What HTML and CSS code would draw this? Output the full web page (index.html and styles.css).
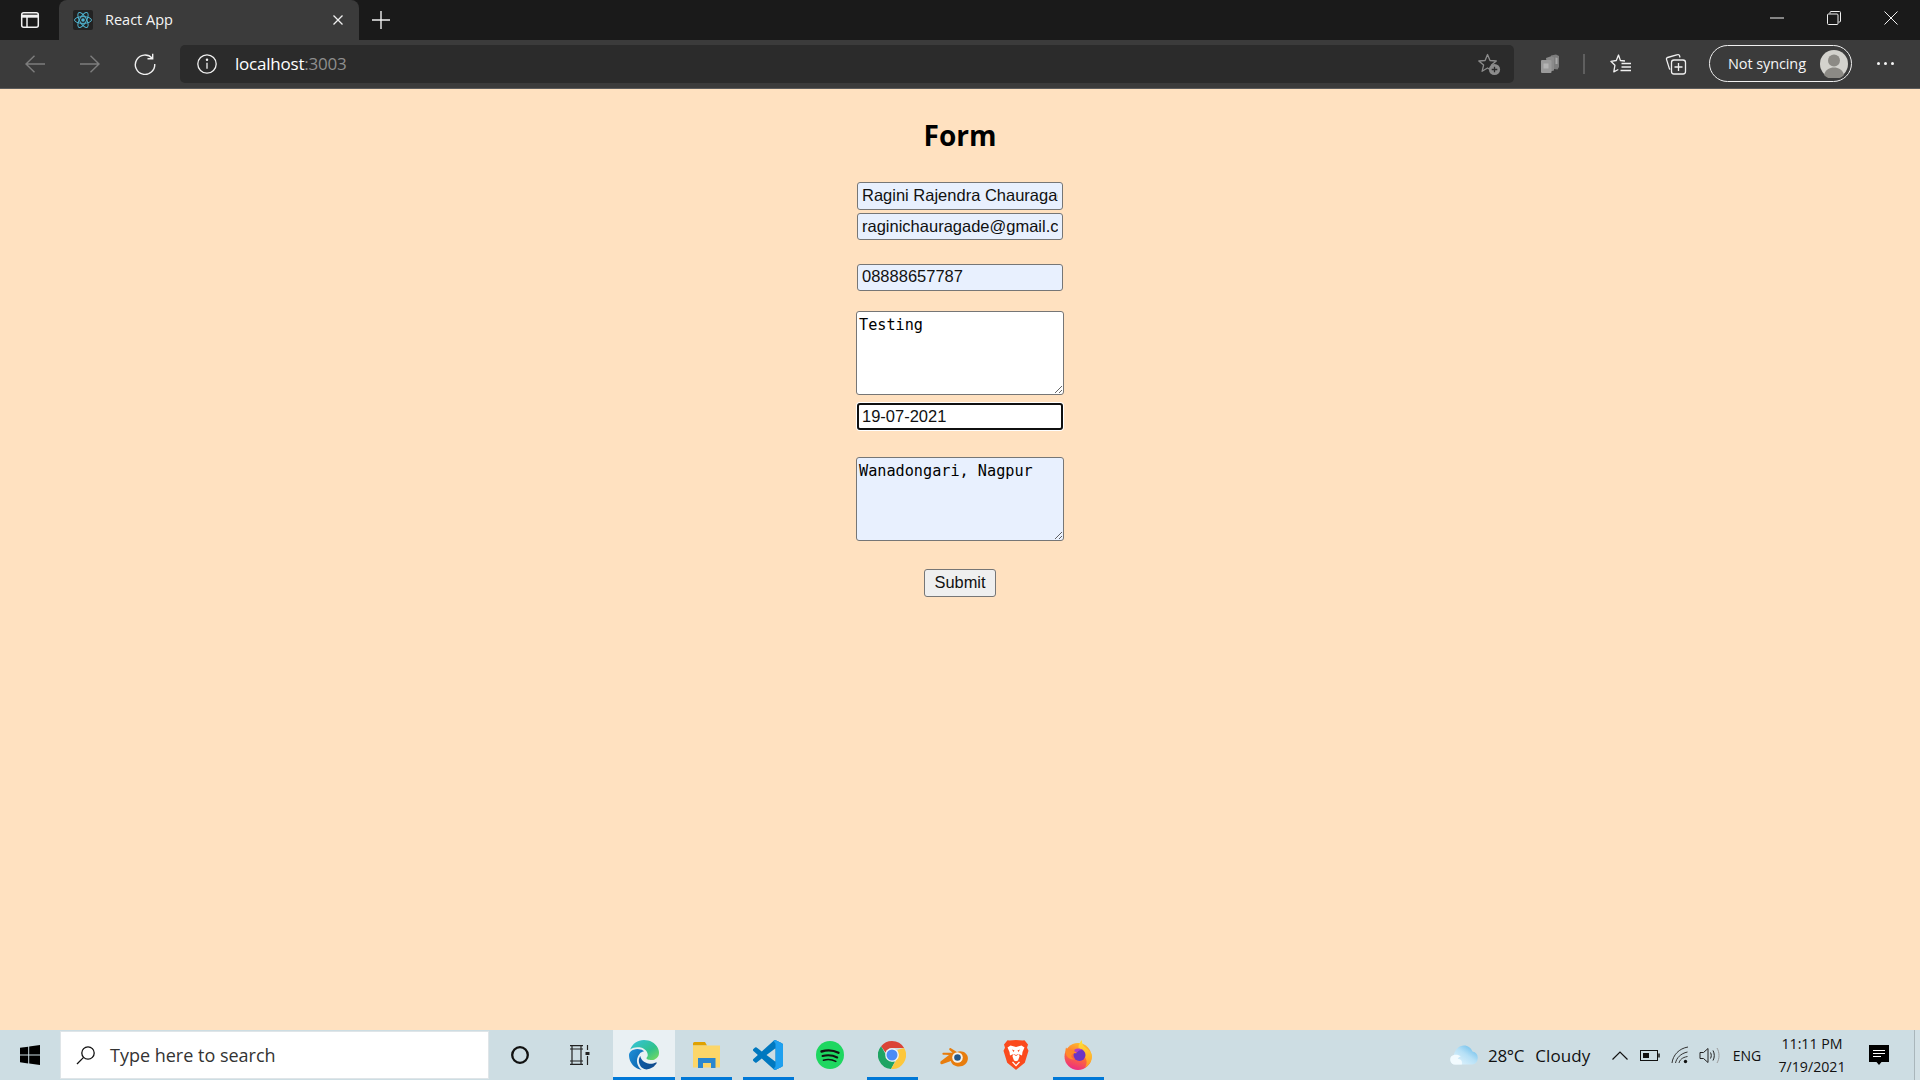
FILE: index.html
```html
<!DOCTYPE html>
<html lang="en">
<head>
<meta charset="utf-8">
<title>React App</title>
<link rel="stylesheet" href="styles.css">
</head>
<body>
<div class="screen">
  <header class="titlebar">
    <div class="sidebtn">
      <svg width="20" height="18" viewBox="0 0 20 18" fill="none" stroke="#f2f2f2" stroke-width="1.5"><rect x="1.7" y="1.7" width="16.6" height="14.6" rx="2"/><path d="M1.7 5.2h16.6" stroke-width="3"/><path d="M7 6v10"/></svg>
    </div>
    <div class="tab">
      <span class="favicon">
        <svg width="20" height="20" viewBox="0 0 20 20" fill="none" stroke="#4fb3cf" stroke-width="1"><circle cx="10" cy="10" r="1.8" fill="#4fb3cf" stroke="none"/><ellipse cx="10" cy="10" rx="8.5" ry="3.4"/><ellipse cx="10" cy="10" rx="8.5" ry="3.4" transform="rotate(60 10 10)"/><ellipse cx="10" cy="10" rx="8.5" ry="3.4" transform="rotate(120 10 10)"/></svg>
      </span>
      <span class="tabtitle">React App</span>
      <svg class="tabclose" width="12" height="12" viewBox="0 0 12 12" stroke="#f0f0f0" stroke-width="1.3"><path d="M1.5 1.5l9 9M10.500 1.500l-9 9"/></svg>
    </div>
    <div class="newtab">
      <svg width="18" height="18" viewBox="0 0 18 18" stroke="#f0f0f0" stroke-width="1.4"><path d="M9 0v18M0 9h18"/></svg>
    </div>
    <div class="winctrls">
      <div class="winbtn"><svg width="14" height="2" viewBox="0 0 14 2" stroke="#f0f0f0" stroke-width="1"><path d="M0 1h14"/></svg></div>
      <div class="winbtn"><svg width="14" height="14" viewBox="0 0 14 14" fill="none" stroke="#f0f0f0" stroke-width="1"><rect x=".5" y="3" width="10.500" height="10.500" rx="1"/><path d="M3 2.500V1.500a1 1 0 0 1 1-1h8.500a1 1 0 0 1 1 1V10a1 1 0 0 1-1 1h-1"/></svg></div>
      <div class="winbtn"><svg width="14" height="14" viewBox="0 0 14 14" stroke="#f0f0f0" stroke-width="1"><path d="M.5.500l13 13M13.500.500l-13 13"/></svg></div>
    </div>
  </header>

  <nav class="toolbar">
    <div class="navbtn"><svg width="20" height="18" viewBox="0 0 20 18" fill="none" stroke="#7d7d7d" stroke-width="1.4"><path d="M20 9H1M9.500.800L1 9l8.500 8.200"/></svg></div>
    <div class="navbtn"><svg width="20" height="18" viewBox="0 0 20 18" fill="none" stroke="#7d7d7d" stroke-width="1.4"><path d="M0 9h19M10.500.800L19 9l-8.500 8.200"/></svg></div>
    <div class="navbtn"><svg width="22" height="22" viewBox="0 0 22 22" fill="none" stroke="#f0f0f0" stroke-width="1.4"><path d="M18.200 5.200A9.700 9.700 0 1 0 20.700 11"/><path d="M18.700 .800v5h-5.200"/></svg></div>
    <div class="addressbar">
      <span class="infoicon"><svg width="20" height="20" viewBox="0 0 20 20" fill="none" stroke="#f0f0f0" stroke-width="1.3"><circle cx="10" cy="10" r="9.200"/><path d="M10 8.800v6"/><circle cx="10" cy="5.800" r=".6" fill="#f0f0f0"/></svg></span>
      <span class="url">localhost<span class="port">:3003</span></span>
      <span class="staradd"><svg width="24" height="24" viewBox="0 0 24 24"><path d="M10.500 2.500l2.500 6 6.300.5-4.800 4.100 1.500 6.200-5.500-3.300-5.400 3.300 1.500-6.200L1.800 9l6.300-.5z" fill="none" stroke="#8c8c8c" stroke-width="1.300" stroke-linejoin="round"/><circle cx="17.500" cy="17.500" r="5.600" fill="#8c8c8c"/><path d="M17.500 14.700v5.600M14.700 17.500h5.600" stroke="#2b2b2b" stroke-width="1.300"/></svg></span>
    </div>
    <div class="toolicon first"><svg width="20" height="20" viewBox="0 0 20 20"><path d="M11 1.500l5-1 3 1.500v11l-1.500 2.500-6.500-1z" fill="#7d7d7d"/><path d="M15.500 3.500l2 .5v6h-2z" fill="#a8a8a8"/><path d="M6 4l5-1.800 3 1.300v13l-6 1.500z" fill="#8a8a8a"/><rect x="1" y="6" width="10.500" height="13" rx="1" fill="#9a9a9a"/><rect x="3.500" y="9.500" width="5" height="5" fill="#b4b4b4"/></svg></div>
    <div class="tooldivider"></div>
    <div class="toolicon"><svg width="22" height="22" viewBox="0 0 22 22" fill="none" stroke="#f0f0f0" stroke-width="1.300" stroke-linejoin="round"><path d="M15 8l-4.600-.5L8.500 2 6.300 7.500.9 8.300l4 4-1.100 6.500 4.500-2.300"/><path d="M11.500 10.500H21M11.500 14H21M10.500 17.500H21"/></svg></div>
    <div class="toolicon"><svg width="22" height="22" viewBox="0 0 22 22" fill="none" stroke="#f0f0f0" stroke-width="1.300" stroke-linejoin="round"><path d="M15 4.500l-.5-1.800a1.500 1.500 0 0 0-1.900-1L2.500 4.500a1.500 1.500 0 0 0-1 1.900l2.800 9a1.500 1.500 0 0 0 1 1"/><rect x="6.500" y="7" width="14" height="14" rx="2.500"/><path d="M13.500 10v8M9.500 14h8"/></svg></div>
    <div class="syncpill">
      <span class="synctext">Not syncing</span>
      <svg class="avatar" width="28" height="28" viewBox="0 0 28 28"><circle cx="14" cy="14" r="14" fill="#d3d2cd"/><circle cx="14" cy="10.500" r="6" fill="#8c8a85"/><path d="M4 25c1.500-5.500 5.500-7.500 10-7.500s8.500 2 10 7.500a14 14 0 0 1-20 0z" fill="#8c8a85"/></svg>
    </div>
    <div class="moredots"><span></span><span></span><span></span></div>
  </nav>

  <main class="page">
    <h1 class="formtitle">Form</h1>
    <form class="form">
      <input class="field autofill tall" type="text" value="Ragini Rajendra Chauragade">
      <input class="field autofill mt-3" type="text" value="raginichauragade@gmail.com">
      <input class="field autofill raised mt-24" type="text" value="08888657787">
      <textarea class="area mt-20">Testing</textarea>
      <input class="field focused mt-8" type="text" value="19-07-2021">
      <textarea class="area autofill mt-27">Wanadongari, Nagpur</textarea>
      <button class="submit" type="button">Submit</button>
    </form>
  </main>

  <footer class="taskbar">
    <div class="startbtn">
      <svg width="20" height="20" viewBox="0 0 20 20" fill="#000"><path d="M0 2.800l8.200-1.100v7.900H0zM9.200 1.500L20 0v9.600H9.200zM0 10.500h8.200v7.900L0 17.200zM9.200 10.500H20V20L9.200 18.500z"/></svg>
    </div>
    <div class="searchbox">
      <svg width="20" height="20" viewBox="0 0 20 20" fill="none" stroke="#111" stroke-width="1.300"><circle cx="12" cy="8" r="6.200"/><path d="M7.600 12.400L1 19"/></svg>
      <span class="searchtext">Type here to search</span>
    </div>
    <div class="sysbtn wide"><svg width="20" height="20" viewBox="0 0 20 20" fill="none" stroke="#111" stroke-width="2.300"><circle cx="10" cy="10" r="7.800"/></svg></div>
    <div class="sysbtn"><svg width="20" height="20" viewBox="0 0 20 20" fill="none" stroke="#222" stroke-width="1.200"><path d="M0 .6h13M2 .6v3M11 .6v3M0 4h13M2 4v12M11 4v12M0 16h13M2 16v3.500M11 16v3.500M0 19.400h13M17.500 0v5M17.500 11v9"/><rect x="15.500" y="7" width="4" height="3" fill="#222" stroke="none"/></svg></div>
    <div class="apps">
      <div class="app active"><svg width="30" height="30" viewBox="0 0 24 24">
        <defs>
          <linearGradient id="e1" x1="0" y1="0" x2="1" y2="1"><stop offset="0" stop-color="#36c2e0"/><stop offset=".6" stop-color="#2fc28c"/><stop offset="1" stop-color="#7fdc5a"/></linearGradient>
          <linearGradient id="e2" x1="0" y1="0" x2="1" y2="1"><stop offset="0" stop-color="#1f8fd8"/><stop offset="1" stop-color="#0a5fa8"/></linearGradient>
          <linearGradient id="e3" x1="0" y1="0" x2="1" y2="0"><stop offset="0" stop-color="#0c59a4"/><stop offset="1" stop-color="#114a8b"/></linearGradient>
        </defs>
        <path fill="url(#e3)" d="M21.860 17.860q.14 0 .25.12.1.13.1.25t-.11.33l-.32.46-.43.53-.44.5q-.21.25-.38.42l-.22.23q-.58.53-1.340 1.040-.76.51-1.600.91-.86.4-1.740.64t-1.670.24q-.9 0-1.690-.28-.8-.28-1.480-.78-.68-.5-1.220-1.170-.53-.66-.92-1.440-.38-.77-.58-1.600-.2-.83-.2-1.670 0-1 .32-1.960.33-.97.87-1.800.14.95.55 1.770.41.82 1.020 1.500.6.68 1.380 1.210.78.54 1.640.9.86.36 1.770.56.92.2 1.800.2 1.120 0 2.180-.24 1.060-.23 2.060-.72l.2-.1.2-.05z"/>
        <path fill="url(#e2)" d="M6.360 16.590q0 1.100.27 2.150.27 1.060.78 2.030.51.96 1.240 1.770.74.82 1.660 1.400-1.470-.2-2.800-.74-1.330-.55-2.480-1.370-1.150-.83-2.080-1.900-.92-1.070-1.580-2.330T.36 14.940Q0 13.540 0 12.060q0-.81.32-1.490.31-.68.83-1.230.53-.55 1.200-.96.66-.4 1.350-.66.74-.27 1.500-.39.78-.12 1.550-.12.7 0 1.420.1.72.12 1.400.35.68.23 1.320.57.63.35 1.160.83-.35 0-.7.07-.33.07-.65.23v-.02q-.63.28-1.200.74-.57.46-1.050 1.040-.48.58-.87 1.260-.38.67-.65 1.390-.27.71-.42 1.440-.15.72-.15 1.380z"/>
        <path fill="url(#e1)" d="M11.960.06q1.700 0 3.330.39 1.630.38 3.070 1.150 1.430.77 2.620 1.930 1.180 1.160 1.980 2.700.49.94.76 1.960.28 1 .28 2.080 0 .89-.23 1.700-.24.8-.69 1.480-.45.68-1.100 1.220-.64.53-1.450.88-.54.24-1.110.36-.58.13-1.160.13-.42 0-.97-.03-.54-.03-1.100-.12-.55-.1-1.050-.28-.5-.19-.84-.5-.12-.09-.23-.24-.1-.16-.1-.33 0-.15.16-.35.16-.2.35-.5.2-.28.36-.68.16-.4.16-.95 0-1.060-.4-1.960-.4-.91-1.060-1.640-.66-.74-1.520-1.280-.86-.55-1.790-.89-.84-.3-1.720-.44-.87-.14-1.760-.14-1.550 0-3.060.45T.94 7.550q.71-1.740 1.810-3.130 1.100-1.380 2.520-2.350Q6.680 1.100 8.370.58q1.700-.52 3.580-.52Z"/>
      </svg></div>
      <div class="app running"><svg width="28" height="26" viewBox="0 0 28 26">
        <path d="M1 1.500A1.500 1.500 0 0 1 2.500 0h10.500l2 3.500H1z" fill="#e0a100"/>
        <rect x="1" y="3.500" width="27" height="22" fill="#fcd669"/>
        <path d="M6 16h17.500v10h-4.500v-5h-8v5H6z" fill="#2a87d0"/>
      </svg></div>
      <div class="app running"><svg width="30" height="30" viewBox="0 0 24 24">
        <clipPath id="vs"><path d="M23.150 2.587L18.210.21a1.494 1.494 0 0 0-1.705.29l-9.460 8.630-4.120-3.128a.999.999 0 0 0-1.276.057L.327 7.261A1 1 0 0 0 .326 8.740L3.899 12 .326 15.260a1 1 0 0 0 .001 1.479L1.650 17.940a.999.999 0 0 0 1.276.057l4.120-3.128 9.460 8.630a1.492 1.492 0 0 0 1.704.29l4.942-2.377A1.500 1.500 0 0 0 24 20.060V3.939a1.500 1.500 0 0 0-.85-1.352zm-5.146 14.861L10.826 12l7.178-5.448v10.896z"/></clipPath>
        <g clip-path="url(#vs)"><rect width="24" height="24" fill="#0078bf"/><path d="M16 0h8v24h-8l2-3V3z" fill="#1fa0ef"/></g>
      </svg></div>
      <div class="app"><svg width="28" height="28" viewBox="0 0 28 28" fill="none" stroke="#121212" stroke-linecap="round"><circle cx="14" cy="14" r="14" fill="#1ed760" stroke="none"/><path d="M5.500 10.500c5.500-1.700 12-1.300 17 1.300" stroke-width="2.400"/><path d="M6.500 15c4.700-1.300 10.300-.9 14.700 1.500" stroke-width="2"/><path d="M7.500 19.200c4-1 8.500-.8 12.300 1.200" stroke-width="1.600"/></svg></div>
      <div class="app running"><svg width="28" height="28" viewBox="0 0 28 28">
        <path d="M14 0a14 14 0 0 1 12.100 7H14a7 7 0 0 0-6.500 4.500L3.100 5.200A14 14 0 0 1 14 0z" fill="#db4437"/>
        <path d="M3.100 5.200l6.100 10.700A7 7 0 0 0 17 20.500l-4 7.500A14 14 0 0 1 3.100 5.200z" fill="#1fa463"/>
        <path d="M26.100 7A14 14 0 0 1 13 28l6.200-10.500A7 7 0 0 0 19 9.100z" fill="#fdc73c"/>
        <circle cx="14" cy="14" r="6.800" fill="#f0f4f6"/><circle cx="14" cy="14" r="5.500" fill="#4b8bf5"/>
      </svg></div>
      <div class="app"><svg width="30" height="24" viewBox="0 0 30 24">
        <path d="M1.500 18.500L10 12 6 11.800h-1.700c-1.200-.1-1.200-1.900 0-2l9.300-.1L10.500 7c-1-1 .3-2.400 1.400-1.700l6 3.700c5-2.300 10.800 1 11 6 .2 5-4.200 8.500-9 8.500-4.200 0-7.300-2.300-8-5.500l-8.900 3.300c-1.200.4-2.200-1.300-1.500-2.300z" fill="#e87d0d"/>
        <circle cx="18.500" cy="14.500" r="5.300" fill="#f5f3ee"/><circle cx="18.500" cy="14.500" r="3.300" fill="#265787"/>
      </svg></div>
      <div class="app"><svg width="26" height="30" viewBox="0 0 26 30">
        <path d="M13 0l6.500.5 2-.2L25 4.500l-1 3.200 1.500 3-3.700 12L13.500 29.500 13 30l-.5-.5L4.200 22.700.5 10.700l1.500-3-1-3.200L4.500.3l2 .2z" fill="#fb4a1d"/>
        <path d="M7.500 5.500L13 7l5.500-1.500 3 2-2 4.500-.5 3.500-3.500-1.500-2.500 1-2.500-1L7 15.500 6.500 12l-2-4.500z" fill="#fff"/>
        <path d="M10 14l3 2 3-2 .5 2.500-1.500 4-2 .8-2-.8-1.500-4zM10 21.500l3 3.200 3-3.200 1 .8-4 4.200-4-4.200z" fill="#fff"/>
        <path d="M9 9.500l2.500 1-1 1.500zM17 9.500l-2.500 1 1 1.500z" fill="#fb4a1d"/>
      </svg></div>
      <div class="app running"><svg width="30" height="30" viewBox="0 0 30 30">
        <defs>
          <linearGradient id="ff" x1="0.7" y1="0" x2="0.35" y2="1"><stop offset="0" stop-color="#ffc22e"/><stop offset=".5" stop-color="#ff7132"/><stop offset="1" stop-color="#ec2a86"/></linearGradient>
          <linearGradient id="ffy" x1="0.5" y1="0" x2="0.5" y2="1"><stop offset="0" stop-color="#ffe23a"/><stop offset="1" stop-color="#ff9a26"/></linearGradient>
        </defs>
        <circle cx="15" cy="16.500" r="13.500" fill="url(#ff)"/>
        <path d="M19 0c-.5 3 1 5.500 3.500 7.500 3.500 2.500 6.500 5 6.500 9 0 5-3 9-7 11 2.500-4 2-8-.5-11-2-2.500-6-4-6-9C15.500 4.500 17 2 19 0z" fill="url(#ffy)"/>
        <circle cx="16.500" cy="15" r="6" fill="#6b35c6"/>
        <path d="M11.500 9.500c2.500-1.500 6-1.500 8.500.5-2.500-.3-4.500.5-5.500 2-1.500.6-3.500.4-3-2.500z" fill="#b13fc9"/>
        <path d="M3 7.500c1 1.500 2.500 2.500 5 3 2 .5 5 1 6 2.500-2 .3-4.500 0-5.500 2-.7 1.500.5 3.500 3 4.500-3.500.2-6.500-1-8-4-1.300-2.700-1.300-5.500-.5-8z" fill="#ff8a2a"/>
      </svg></div>
    </div>
    <div class="tray">
      <div class="weather">
        <svg width="28" height="20" viewBox="0 0 28 20">
          <defs><linearGradient id="cl" x1="0" y1="1" x2="1" y2="0"><stop offset="0" stop-color="#eef9fe"/><stop offset=".55" stop-color="#b6e0f6"/><stop offset="1" stop-color="#58b4e8"/></linearGradient></defs>
          <path d="M5 19.500a4.800 4.800 0 0 1-1.200-9.400C5 4.500 9 .5 14 .5c4 0 7 2.500 8.500 6a6.600 6.600 0 0 1-.5 13z" fill="url(#cl)"/>
          <path d="M5 19.500a4.800 4.800 0 0 1-1.200-9.400c2-.8 5-.5 7 1.500-1.500 0-2.500 1-3 2.500 2-.5 5 1 4 5.400z" fill="#f2fbff"/>
        </svg>
        <span class="temp">28°C</span>
        <span class="cond">Cloudy</span>
      </div>
      <div class="trayicon chev"><svg width="16" height="9" viewBox="0 0 16 9" fill="none" stroke="#111" stroke-width="1.200"><path d="M.5 8.500L8 1l7.500 7.500"/></svg></div>
      <div class="trayicon batt"><svg width="20" height="11" viewBox="0 0 20 11" fill="none" stroke="#111" stroke-width="1"><rect x=".5" y=".5" width="17" height="10"/><rect x="3" y="3" width="6" height="5" fill="#111" stroke="none"/><path d="M19 3.500v4" stroke-width="1.500"/></svg></div>
      <div class="trayicon wifi"><svg width="20" height="18" viewBox="0 0 20 18" fill="none" stroke="#333" stroke-width="1"><path d="M1 17C2 9 8 2.500 17 1M4.500 17c1-5 5-9.500 12-11M8 17c.7-3 3-5.500 8.500-6.500" /><circle cx="14.500" cy="15.500" r="1.700" fill="#111" stroke="none"/></svg></div>
      <div class="trayicon vol"><svg width="21" height="17" viewBox="0 0 21 17" fill="none" stroke="#222" stroke-width="1"><path d="M1 5.500h3.500L9 1.500v14l-4.500-4H1z"/><path d="M11.500 5.500c1 2 1 4 0 6M14 3.500c1.700 3 1.700 7 0 10"/><path d="M18 1c2.700 4.500 2.700 10.500 0 15" stroke="#999"/></svg></div>
      <div class="lang">ENG</div>
      <div class="clock"><span>11:11 PM</span><span>7/19/2021</span></div>
      <div class="notif"><svg width="20" height="20" viewBox="0 0 20 20"><path d="M0 0h20v17h-7.500L10 20l-2.500-3H0z" fill="#000"/><path d="M4 5.500h12M4 8.500h12M4 11.500h8" stroke="#fff" stroke-width="1"/></svg></div>
      <div class="showdesktop"></div>
    </div>
  </footer>
</div>
</body>
</html>
```

FILE: styles.css
```css
* { box-sizing: border-box; }
html, body { margin: 0; padding: 0; height: 100%; }
body { overflow: hidden; font-family: "Open Sans", "Noto Sans", sans-serif; }
.screen { width: 1920px; height: 1080px; display: flex; flex-direction: column; background: #ffe1c0; }

.titlebar { height: 40px; flex: none; display: flex; background: #1a1a1a; color: #f5f5f5; }
.sidebtn { width: 59px; display: flex; align-items: center; justify-content: center; }
.tab { width: 300px; display: flex; align-items: center; background: #3b3b3b; border-radius: 8px 8px 0 0; padding: 0 15px 0 14px; }
.favicon { width: 20px; height: 20px; background: #222; display: flex; border-radius: 2px; }
.tabtitle { margin-left: 12px; flex: 1; font-size: 14.5px; padding-bottom: 2px; }
.tabclose { flex: none; }
.newtab { width: 44px; display: flex; align-items: center; justify-content: center; }
.winctrls { margin-left: auto; margin-right: 1px; display: flex; }
.winbtn { width: 57px; display: flex; align-items: center; justify-content: center; padding-bottom: 4px; }

.toolbar { height: 49px; flex: none; display: flex; align-items: center; padding: 0 0 1px 7px; background: #3b3b3b; border-bottom: 1px solid #5c5c5c; color: #f5f5f5; }
.navbtn { width: 55px; display: flex; justify-content: center; align-items: center; }
.addressbar { width: 1334px; height: 38px; margin-left: 8px; background: #2b2b2b; border-radius: 5px; display: flex; align-items: center; padding: 0 13px 0 17px; }
.infoicon { display: flex; width: 38px; }
.url { font-size: 17px; color: #fff; flex: 1; letter-spacing: -0.22px; }
.port { color: #8e8e8e; }
.staradd { display: flex; }
.toolicon { width: 55px; display: flex; justify-content: center; align-items: center; }
.toolicon.first { margin-left: 8px; }
.tooldivider { width: 2px; height: 20px; background: #5f5f5f; margin: 0 8px 0 6px; }
.syncpill { width: 143px; height: 37px; margin-left: 6px; border: 1.5px solid #f0f0f0; border-radius: 19px; display: flex; align-items: center; justify-content: space-between; padding: 0 3px 0 18px; }
.synctext { font-size: 14.5px; letter-spacing: -0.1px; }
.moredots { display: flex; gap: 4px; margin-left: 25px; }
.moredots span { width: 3px; height: 3px; border-radius: 50%; background: #f5f5f5; }

.page { flex: 1; display: flex; flex-direction: column; align-items: center; padding-top: 26px; }
.formtitle { margin: 0 0 27px; font: 700 28px/40px "Open Sans", "Noto Sans", sans-serif; color: #000; }
.form { display: flex; flex-direction: column; align-items: center; }
.field { width: 206px; height: 27px; padding: 0 4px 1px; margin: 0; border: 1px solid #767676; border-radius: 3px; background: #fff; font: 16.5px "Liberation Sans", Arial, sans-serif; color: #111; outline: none; }
.field.tall { height: 28px; }
.field.raised { padding-bottom: 2px; }
.autofill { background: #e8f0fe; }
.field.focused { border: 2px solid #101010; box-shadow: 0 0 0 1px #fff; padding: 0 3px; }
.area { display: block; width: 208px; height: 84px; margin: 0; padding: 4px 2px; border: 1px solid #767676; border-radius: 3px; font: 15.2px/18px "DejaVu Sans Mono", "Liberation Mono", monospace; color: #000; outline: none; }
.area:not(.autofill) { background: #fff; }
.mt-3 { margin-top: 3px; }
.mt-8 { margin-top: 8px; }
.mt-20 { margin-top: 20px; }
.mt-24 { margin-top: 24px; }
.mt-27 { margin-top: 27px; }
.submit { width: 72px; height: 28px; margin-top: 28px; padding: 0 0 1px; background: #efefef; border: 1px solid #767676; border-radius: 3px; font: 16.4px "Liberation Sans", Arial, sans-serif; color: #111; }

.taskbar { height: 50px; flex: none; display: flex; background: #cddde3; color: #111; }
.startbtn { width: 60px; display: flex; align-items: center; justify-content: center; }
.searchbox { width: 429px; margin: 1px 0; background: #fff; display: flex; align-items: center; padding: 0 0 0 15px; border: 1px solid #dfe5e8; }
.searchtext { margin-left: 14px; font-size: 18px; color: #333; }
.sysbtn { width: 60px; display: flex; align-items: center; justify-content: center; }
.sysbtn.wide { width: 61px; }
.apps { display: flex; margin-left: 3px; }
.app { width: 62px; display: flex; align-items: center; justify-content: center; position: relative; }
.app.active { background: #e9f0f3; }
.app.running::after { content: ""; position: absolute; left: 6px; right: 5px; bottom: 0; height: 3px; background: #0078d7; }
.app.active::after { content: ""; position: absolute; left: 0; right: 0; bottom: 0; height: 3px; background: #0078d7; }
.tray { margin-left: auto; display: flex; align-items: center; height: 100%; }
.weather { display: flex; align-items: center; width: 156px; padding-left: 1px; }
.temp { margin-left: 10px; font-size: 17px; letter-spacing: -0.3px; }
.cond { margin-left: 11px; font-size: 17px; letter-spacing: 0.1px; }
.trayicon { display: flex; align-items: center; justify-content: center; }
.chev { width: 30px; }
.batt { width: 30px; }
.wifi { width: 31px; }
.vol { width: 27px; }
.lang { width: 48px; text-align: center; font-size: 14px; }
.clock { width: 82px; display: flex; flex-direction: column; align-items: center; gap: 2px; font-size: 14.2px; line-height: 21px; }
.notif { width: 52px; margin-right: 9px; display: flex; justify-content: center; }
.showdesktop { width: 6px; height: 100%; border-left: 1px solid #a9b6bb; background: #d2e0e5; }
```
